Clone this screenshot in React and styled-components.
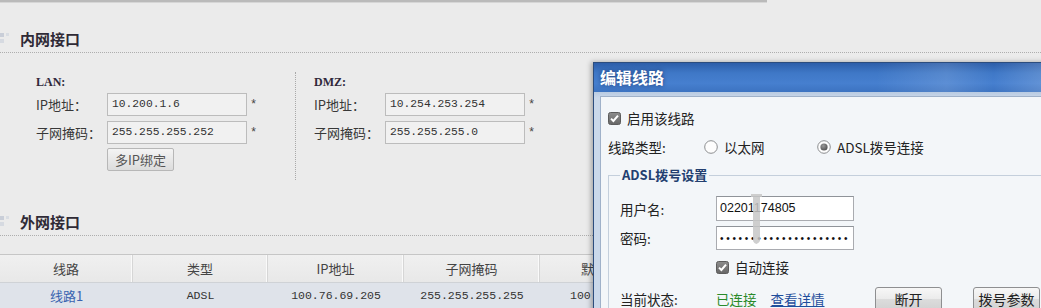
import React from 'react'
import styled, { createGlobalStyle } from 'styled-components'

const GlobalStyle = createGlobalStyle`
  html, body {
    margin: 0;
    padding: 0;
    background: #ebebeb;
  }
  body {
    font-family: "Noto Sans CJK SC", "Liberation Sans", sans-serif;
    color: #333;
  }
`

const cols = '133px 135px 136px 136px 135px 135px 135px 136px'

const lan = [
  { label: 'IP地址：', value: '10.200.1.6' },
  { label: '子网掩码：', value: '255.255.255.252' }
]
const dmz = [
  { label: 'IP地址：', value: '10.254.253.254' },
  { label: '子网掩码：', value: '255.255.255.0' }
]
const heads = ['线路', '类型', 'IP地址', '子网掩码', '默认网关', '', '', '']
const row = ['线路1', 'ADSL', '100.76.69.205', '255.255.255.255', '100.76', '', '', '']

function SectionIcon () {
  return (
    <svg width="20" height="14" viewBox="0 0 20 14">
      <rect x="0" y="1" width="4" height="4" fill="#c9ced8" />
      <rect x="0" y="7" width="4" height="4" fill="#d6dae1" />
      <rect x="6" y="1" width="3" height="3" fill="#d9dde3" />
    </svg>
  )
}

function Check () {
  return (
    <svg width="13" height="13" viewBox="0 0 13 13">
      <defs>
        <linearGradient id="cb" x1="0" y1="0" x2="0" y2="1">
          <stop offset="0" stopColor="#8d8d8d" />
          <stop offset="1" stopColor="#666" />
        </linearGradient>
      </defs>
      <rect x="0.5" y="0.5" width="12" height="12" rx="2" fill="url(#cb)" stroke="#5c5c5c" />
      <path d="M3 6.6 L5.4 9 L10 3.6" fill="none" stroke="#fff" strokeWidth="2" />
    </svg>
  )
}

function Radio ({ on }) {
  return (
    <svg width="14" height="14" viewBox="0 0 14 14">
      <defs>
        <radialGradient id="rd" cx="0.4" cy="0.35" r="0.7">
          <stop offset="0" stopColor="#9a9a9a" />
          <stop offset="1" stopColor="#4f4f4f" />
        </radialGradient>
      </defs>
      <circle cx="7" cy="7" r="6.3" fill="#fdfdfd" stroke="#8c8e90" />
      {on && <circle cx="7" cy="7" r="3.6" fill="url(#rd)" />}
    </svg>
  )
}

function Cursor () {
  return (
    <svg width="14" height="54" viewBox="0 0 14 54">
      <path d="M1 1 H12 V4 H10 V48 Q6 54 3 48 V4 H1 Z" fill="#c7c7c7" opacity="0.85" />
    </svg>
  )
}

export default function App () {
  return (
    <>
      <GlobalStyle />
      <Page>
        <TopRule />
        <SectionHead $top={24}><SectionIcon />内网接口</SectionHead>
        <LanDmz>
          <NetCol $w={259}>
            <ColTitle>LAN:</ColTitle>
            {lan.map(f => (
              <FieldRow key={f.label}>
                <FieldLabel>{f.label}</FieldLabel>
                <TextBox>{f.value}</TextBox>
                <Star>*</Star>
              </FieldRow>
            ))}
            <BindButton>多IP绑定</BindButton>
          </NetCol>
          <Divider />
          <NetCol $pad={18}>
            <ColTitle>DMZ:</ColTitle>
            {dmz.map(f => (
              <FieldRow key={f.label}>
                <FieldLabel>{f.label}</FieldLabel>
                <TextBox>{f.value}</TextBox>
                <Star>*</Star>
              </FieldRow>
            ))}
          </NetCol>
        </LanDmz>
        <SectionHead $top={30}><SectionIcon />外网接口</SectionHead>
        <Table>
          <HeadRow>
            {heads.map((h, i) => <HeadCell key={i}>{h}</HeadCell>)}
          </HeadRow>
          <DataRow>
            {row.map((c, i) => (
              <DataCell key={i} $mono={i > 0} $lead={i === 4 ? 30 : 0}>
                {i === 0 ? <RowLink>{c}</RowLink> : c}
              </DataCell>
            ))}
          </DataRow>
        </Table>

        <Dialog>
          <TitleBar>编辑线路</TitleBar>
          <Frame>
            <Body>
              <CheckRow>
                <Check />
                <span>启用该线路</span>
              </CheckRow>
              <TypeRow>
                <TypeLabel>线路类型:</TypeLabel>
                <RadioItem $w={113}><Radio />以太网</RadioItem>
                <RadioItem><Radio on />ADSL拨号连接</RadioItem>
              </TypeRow>
              <Group>
                <Legend>ADSL拨号设置</Legend>
                <FormRow $top={12}>
                  <DlgLabel>用户名:</DlgLabel>
                  <DlgInput $h={25}>02201174805</DlgInput>
                </FormRow>
                <FormRow $top={5}>
                  <DlgLabel>密码:</DlgLabel>
                  <DlgInput $h={24}><Dots>•••••••••••••••••••••</Dots></DlgInput>
                </FormRow>
                <AutoRow>
                  <Check />
                  <span>自动连接</span>
                </AutoRow>
                <StatusRow>
                  <DlgLabel>当前状态:</DlgLabel>
                  <StatusText>
                    <Connected>已连接</Connected>
                    <Detail>查看详情</Detail>
                  </StatusText>
                  <DlgButton>断开</DlgButton>
                  <DlgButton $gap={31}>拨号参数</DlgButton>
                </StatusRow>
              </Group>
            </Body>
          </Frame>
        </Dialog>
        <CursorMark><Cursor /></CursorMark>
      </Page>
    </>
  )
}

const Page = styled.div`
position: relative;
width: 1041px;
height: 308px;
overflow: hidden;
background: #ebebeb;
`
const TopRule = styled.div`
width: 767px;
height: 3px;
background: #bababa;
border-bottom: 1px solid #d6d6d6;
box-sizing: border-box;
`
const SectionHead = styled.div`
display: flex;
align-items: center;
height: 22px;
margin-top: ${p => p.$top}px;
padding-bottom: 3px;
border-bottom: 1px dotted #aeaeae;
font-size: 15px;
font-weight: bold;
color: #2f2a36;
svg { flex: none; margin-top: 1px; }
`
const LanDmz = styled.div`
display: flex;
padding-left: 36px;
`
const NetCol = styled.div`
width: ${p => (p.$w ? p.$w + 'px' : 'auto')};
padding-top: 21px;
padding-left: ${p => p.$pad || 0}px;
`
const Divider = styled.div`
align-self: flex-start;
margin-top: 19px;
height: 108px;
border-left: 1px dotted #a9a9a9;
`
const ColTitle = styled.div`
height: 16px;
line-height: 16px;
margin-bottom: 3px;
font-family: "Liberation Serif", serif;
font-weight: bold;
font-size: 12px;
color: #30283a;
`
const FieldRow = styled.div`
display: flex;
align-items: center;
height: 23px;
& + & { margin-top: 5px; }
`
const FieldLabel = styled.div`
width: 71px;
font-size: 13px;
color: #383838;
`
const TextBox = styled.div`
box-sizing: border-box;
width: 140px;
height: 23px;
line-height: 21px;
padding-left: 4px;
border: 1px solid #bcbcbc;
background: #f1f1f1;
font-family: "Liberation Mono", monospace;
font-size: 11.3px;
color: #333;
`
const Star = styled.span`
margin-left: 3px;
font-family: "Liberation Mono", monospace;
font-size: 12px;
color: #444;
`
const BindButton = styled.div`
box-sizing: border-box;
margin: 4px 0 0 71px;
width: 67px;
height: 23px;
line-height: 21px;
text-align: center;
border: 1px solid #b7b7b7;
border-radius: 2px;
background: linear-gradient(#f4f4f4, #dcdcdc);
font-size: 13px;
color: #555;
`
const Table = styled.div`
margin-top: 18px;
border-top: 1px solid #c6c6c6;
width: 1200px;
`
const HeadRow = styled.div`
display: grid;
grid-template-columns: ${cols};
height: 27px;
background: linear-gradient(#f0f0f0, #e8e8e8);
border-bottom: 1px solid #cfd2d6;
`
const HeadCell = styled.div`
line-height: 27px;
text-align: center;
font-size: 13px;
color: #444;
border-right: 1px solid #d6d6d6;
box-shadow: inset -1px 0 #fafafa;
`
const DataRow = styled.div`
display: grid;
grid-template-columns: ${cols};
height: 26px;
background: #dfe3ea;
`
const DataCell = styled.div`
line-height: 26px;
text-align: ${p => (p.$lead ? 'left' : 'center')};
padding-left: ${p => p.$lead}px;
white-space: nowrap;
font-family: ${p => (p.$mono ? '"Liberation Mono", monospace' : '"Noto Sans CJK SC", sans-serif')};
font-size: ${p => (p.$mono ? '11.5px' : '13px')};
color: #333;
`
const RowLink = styled.span`
color: #3a63b0;
`
const Dialog = styled.div`
position: absolute;
left: 593px;
top: 62px;
width: 470px;
height: 270px;
display: flex;
flex-direction: column;
border: 1px solid #2c4d7e;
background: #c6d5e8;
box-shadow: -2px 0 5px rgba(0, 0, 0, 0.3);
`
const TitleBar = styled.div`
height: 29px;
line-height: 29px;
padding-left: 6px;
background:
  linear-gradient(90deg, rgba(255,255,255,0) 60%, rgba(255,255,255,0.12) 75%, rgba(255,255,255,0) 85%, rgba(255,255,255,0.15) 95%),
  linear-gradient(#2d5ea9, #3f78c7 35%, #467fcf 70%, #3c73c1);
color: #fff;
font-size: 16px;
font-weight: bold;
text-shadow: 0 0 4px rgba(20, 40, 90, 0.7);
`
const Frame = styled.div`
flex: 1;
display: flex;
padding: 4px 0 0 6px;
background: linear-gradient(#b9cbe2, #cad8ea 6px);
`
const Body = styled.div`
flex: 1;
padding: 11px 0 0 7px;
border: 1px solid #9fb1c9;
background: #f3f6f9;
font-size: 13.5px;
color: #222;
`
const CheckRow = styled.div`
display: flex;
align-items: center;
gap: 6px;
height: 20px;
`
const TypeRow = styled.div`
display: flex;
align-items: center;
height: 20px;
margin-top: 9px;
`
const TypeLabel = styled.div`
width: 96px;
`
const RadioItem = styled.div`
display: flex;
align-items: center;
gap: 6px;
width: ${p => (p.$w ? p.$w + 'px' : 'auto')};
`
const Group = styled.fieldset`
margin: 9px 0 0 0;
padding: 0 0 0 11px;
border: 1px solid #c4cfdc;
border-right: none;
border-bottom: none;
min-width: 0;
`
const Legend = styled.legend`
padding: 0 2px;
line-height: 18px;
font-size: 13px;
font-weight: bold;
color: #233f70;
`
const FormRow = styled.div`
display: flex;
align-items: center;
margin-top: ${p => p.$top}px;
`
const DlgLabel = styled.div`
width: 96px;
`
const DlgInput = styled.div`
box-sizing: border-box;
width: 138px;
height: ${p => p.$h}px;
line-height: ${p => p.$h - 2}px;
padding-left: 3px;
border: 1px solid #a9abb0;
border-top-color: #8f9399;
background: #fff;
font-family: "Liberation Sans", sans-serif;
font-size: 12.5px;
color: #111;
`
const Dots = styled.span`
font-size: 10px;
letter-spacing: 2.7px;
`
const AutoRow = styled.div`
display: flex;
align-items: center;
gap: 6px;
height: 20px;
margin: 7px 0 0 96px;
`
const StatusRow = styled.div`
display: flex;
align-items: center;
height: 24px;
margin-top: 10px;
`
const StatusText = styled.div`
display: flex;
gap: 14px;
width: 159px;
`
const Connected = styled.span`
color: #2a8a2a;
`
const Detail = styled.span`
color: #1f4e9c;
text-decoration: underline;
`
const DlgButton = styled.div`
box-sizing: border-box;
width: 67px;
height: 24px;
line-height: 22px;
margin-left: ${p => p.$gap || 0}px;
text-align: center;
border: 1px solid #8e8f91;
border-radius: 3px;
background: linear-gradient(#f7f7f7, #ebebeb 50%, #dcdcdc 51%, #d2d2d2);
font-size: 14px;
color: #222;
`
const CursorMark = styled.div`
position: absolute;
left: 750px;
top: 193px;
line-height: 0;
`
